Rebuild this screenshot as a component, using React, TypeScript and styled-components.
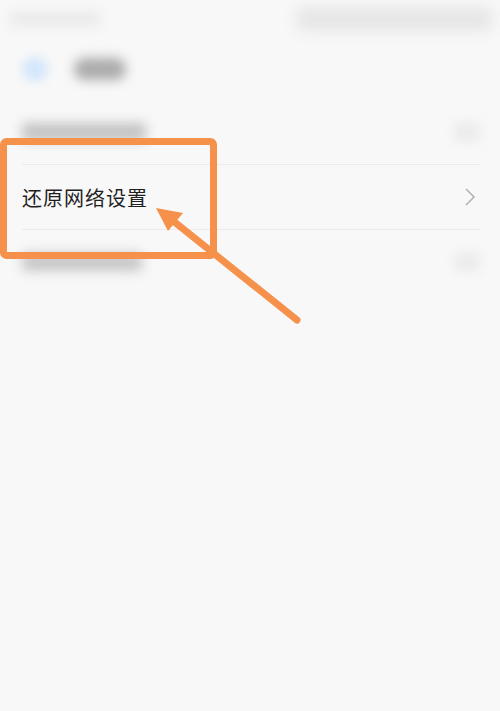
import React from "react";
import styled, { createGlobalStyle } from "styled-components";

const GlobalStyle = createGlobalStyle`
  html, body {
    margin: 0;
    padding: 0;
    background: #f8f8f8;
  }
  body {
    font-family: "Noto Sans CJK SC", "Noto Sans", sans-serif;
  }
`;

const Screen = styled.div`
  position: relative;
  width: 500px;
  height: 711px;
  overflow: hidden;
  background: #f8f8f8;
`;

const StatusBar = styled.div`
  height: 38px;
  display: flex;
  justify-content: space-between;
  align-items: center;
  padding: 0 8px 0 10px;
`;

// 흐릿한 자리표시 (blurred placeholder)
const Blur = styled.div<{ w: number; h: number; c: string; r?: number; b?: number }>`
  width: ${(p) => p.w}px;
  height: ${(p) => p.h}px;
  background: ${(p) => p.c};
  border-radius: ${(p) => p.r ?? 4}px;
  filter: blur(${(p) => p.b ?? 5}px);
  flex-shrink: 0;
`;

const Header = styled.header`
  height: 62px;
  display: flex;
  align-items: center;
  gap: 26px;
  padding-left: 22px;
`;

const List = styled.ul`
  list-style: none;
  margin: 0;
  padding: 0 20px 0 22px;
`;

const Row = styled.li<{ last?: boolean }>`
  height: 64px;
  display: flex;
  align-items: center;
  justify-content: space-between;
  border-bottom: ${(p) => (p.last ? "none" : "1px solid #ebebeb")};
`;

const Label = styled.span`
  font-size: 20px;
  color: #1f1f1f;
  letter-spacing: 1px;
`;

const Chevron = styled.svg`
  width: 12px;
  height: 20px;
  margin-right: 4px;
`;

const Overlay = styled.svg`
  position: absolute;
  left: 0;
  top: 0;
  pointer-events: none;
`;

export default function App() {
  return (
    <Screen>
      <GlobalStyle />
      <StatusBar>
        <Blur w={90} h={14} c="#e9e9e9" b={6} />
        <Blur w={195} h={24} c="#e6e6e6" b={7} />
      </StatusBar>
      <Header>
        <Blur w={26} h={24} c="#d4e7fb" r={12} b={5} />
        <Blur w={52} h={22} c="#ababab" r={10} b={6} />
      </Header>
      <List>
        <Row>
          <Blur w={124} h={18} c="#c2c2c2" b={6} />
          <Blur w={26} h={20} c="#ececec" b={5} />
        </Row>
        <Row>
          <Label>还原网络设置</Label>
          <Chevron viewBox="0 0 12 20">
            <path d="M2 2 L10 10 L2 18" fill="none" stroke="#b3b3b3" strokeWidth="1.6" />
          </Chevron>
        </Row>
        <Row last>
          <Blur w={120} h={18} c="#c6c6c6" b={6} />
          <Blur w={26} h={20} c="#ececec" b={5} />
        </Row>
      </List>
      <Overlay width="500" height="711" viewBox="0 0 500 711">
        <rect x="3.5" y="141.5" width="210" height="114" rx="3" fill="none" stroke="#f5914a" strokeWidth="7" />
        <line x1="297" y1="320" x2="172" y2="220" stroke="#f5914a" strokeWidth="7" strokeLinecap="round" />
        <polygon points="156,208 183,213 168,231" fill="#f5914a" />
      </Overlay>
    </Screen>
  );
}
